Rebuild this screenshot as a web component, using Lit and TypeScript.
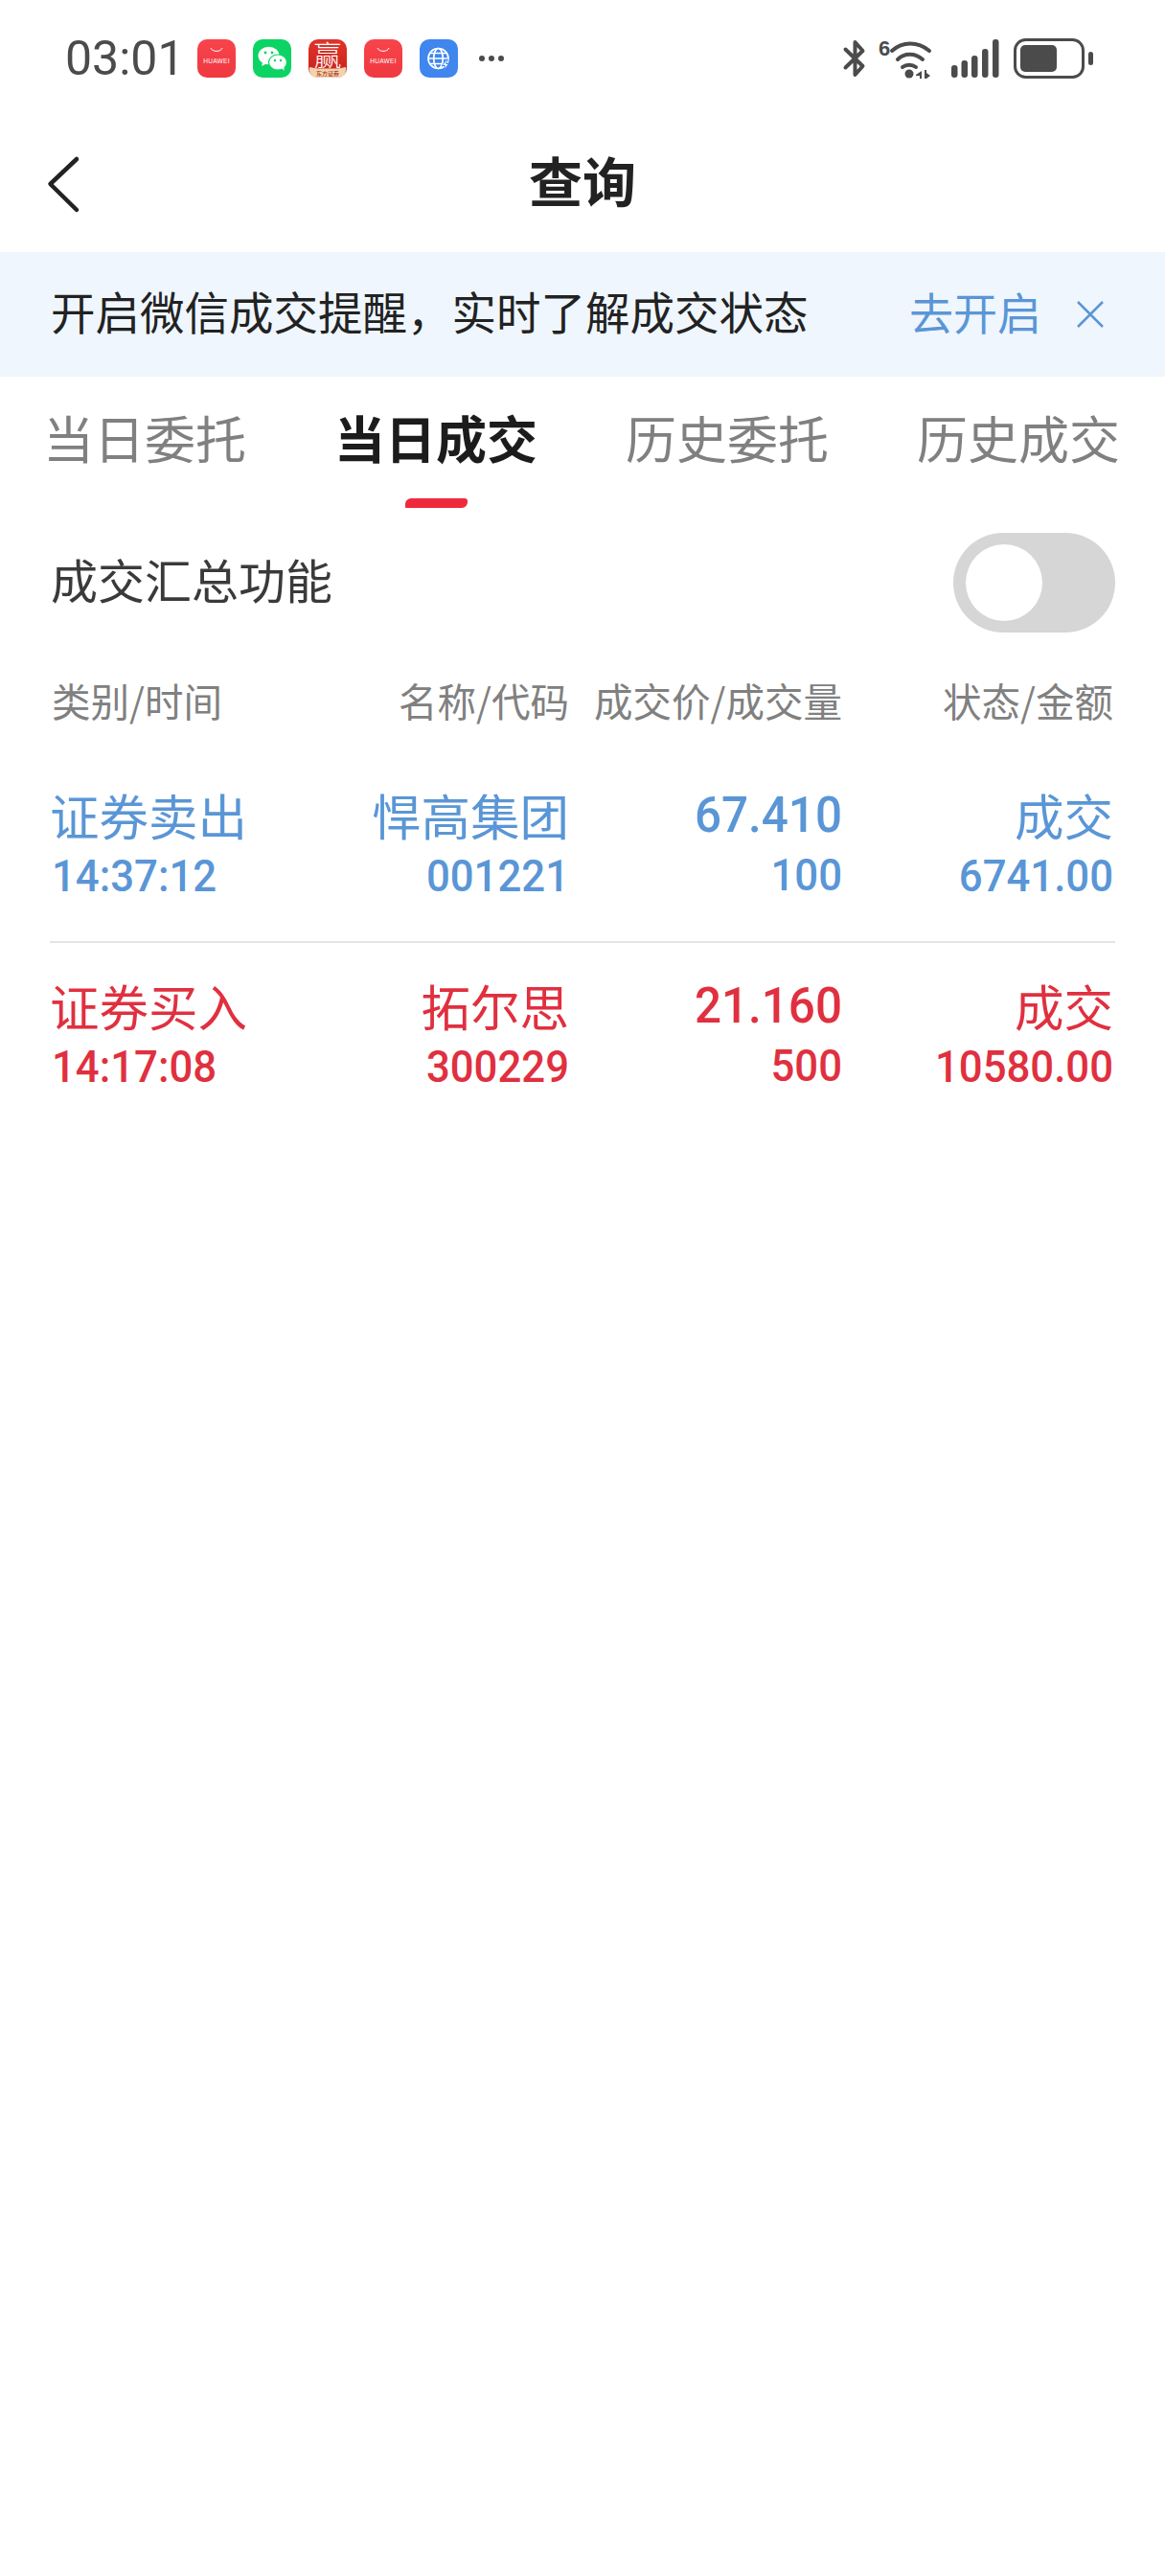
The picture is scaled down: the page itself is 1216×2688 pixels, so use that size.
import { LitElement, html, css } from "lit";
import { customElement } from "lit/decorators.js";

const huawei = html`<svg class="app" viewBox="0 0 40 40">
  <defs><linearGradient id="hw" x1="0" y1="0" x2="0" y2="1"><stop offset="0" stop-color="#f8444c"/><stop offset="1" stop-color="#ef3840"/></linearGradient></defs>
  <rect width="40" height="40" rx="10" fill="url(#hw)"/>
  <path d="M14 9c1.500 4.500 10.500 4.500 12 0" fill="none" stroke="#fff" stroke-width="1"/>
  <text x="20" y="25" class="hwt">HUAWEI</text>
</svg>`;

const wechat = html`<svg class="app" viewBox="0 0 40 40">
  <rect width="40" height="40" rx="10" fill="#0cd464"/>
  <ellipse cx="16.500" cy="17" rx="11" ry="9.300" fill="#fff"/>
  <path d="M10 23l-.8 5 5-2.800z" fill="#fff"/>
  <ellipse cx="26" cy="24" rx="9.500" ry="8" fill="#fff" stroke="#0cd464" stroke-width="1.200"/>
  <path d="M30 30l2.600 2.800-.2-4.600z" fill="#fff"/>
  <circle cx="13" cy="14" r="1.400" fill="#0cd464"/><circle cx="20" cy="14" r="1.400" fill="#0cd464"/>
  <circle cx="23" cy="22" r="1.200" fill="#0cd464"/><circle cx="29" cy="22" r="1.200" fill="#0cd464"/>
</svg>`;

const ying = html`<svg class="app" viewBox="0 0 40 40">
  <defs><linearGradient id="yg" x1="0" y1="0" x2="0" y2="1"><stop offset="0" stop-color="#e0332a"/><stop offset="1" stop-color="#c9201a"/></linearGradient></defs>
  <rect width="40" height="40" rx="10" fill="url(#yg)"/>
  <text x="20" y="28" class="ying">赢</text>
  <path d="M1 29c4 .5 6 1.500 9 1.500h20c3 0 5-1 9-1.500v3a8 8 0 0 1-8 8H9a8 8 0 0 1-8-8z" fill="#f3d3ad"/>
  <text x="20" y="37.500" class="dfzq">东方证券</text>
</svg>`;

const globe = html`<svg class="app" viewBox="0 0 40 40">
  <rect width="40" height="40" rx="10" fill="#3f86ee"/>
  <g fill="none" stroke="#fff" stroke-width="1.700">
    <circle cx="19.500" cy="20" r="10.500"/>
    <ellipse cx="19.500" cy="20" rx="4.800" ry="10.500"/>
    <path d="M9 20h21M10.500 14.500h18M10.500 25.500h18"/>
  </g>
  <path d="M28 21l-4.500 6.500h3l-1.500 5 5.500-7h-3l2-4.500z" fill="#fff" stroke="#3f86ee" stroke-width="1"/>
</svg>`;

const rows = [
  { cls: "sell", type: "证券卖出", time: "14:37:12", name: "悍高集团", code: "001221", price: "67.410", qty: "100", status: "成交", amount: "6741.00" },
  { cls: "buy", type: "证券买入", time: "14:17:08", name: "拓尔思", code: "300229", price: "21.160", qty: "500", status: "成交", amount: "10580.00" },
];

@customElement("app-root")
export class AppRoot extends LitElement {
  static styles = css`
    :host {
      display: block;
      width: 1216px;
      min-height: 2688px;
      background: #fff;
      font-family: "Noto Sans CJK SC", "Noto Sans", sans-serif;
      color: #222;
    }
    svg { overflow: visible; }
    .status {
      height: 122px;
      display: flex;
      align-items: center;
      padding: 0 74px 0 68px;
      box-sizing: border-box;
      color: #4b4b4b;
    }
    .time {
      font: 400 50px/48px Roboto, sans-serif;
      width: 138px;
    }
    .apps { display: flex; gap: 18px; align-items: center; }
    .app { width: 40px; height: 40px; display: block; }
    .hwt { font: 400 6.500px "Liberation Sans", sans-serif; fill: #fff; text-anchor: middle; letter-spacing: 0.3px; }
    .ying { font: 300 29px "Noto Sans CJK SC", sans-serif; fill: #fff; text-anchor: middle; }
    .dfzq { font: 500 6px "Noto Sans CJK SC", sans-serif; fill: #a8321f; text-anchor: middle; }
    .more { display: flex; gap: 4px; margin-left: 22px; }
    .more i { width: 6px; height: 6px; border-radius: 50%; background: #4b4b4b; display: block; }
    .sys { margin-left: auto; display: flex; align-items: center; }
    .bt { width: 24px; height: 40px; display: block; }
    .wifi { width: 56px; height: 42px; margin-left: 13px; display: block; }
    .sig { width: 50px; height: 40px; margin-left: 20px; display: block; }
    .bat { width: 84px; height: 42px; margin-left: 15px; display: block; }

    .nav {
      height: 141px;
      display: flex;
      align-items: center;
      justify-content: center;
      position: relative;
    }
    .back { position: absolute; left: 50px; top: 41px; width: 34px; height: 60px; }
    .title { font-size: 56px; font-weight: 700; line-height: 64px; color: #222; margin-top: -12px; }

    .banner {
      height: 130px;
      background: #eff6fd;
      display: flex;
      align-items: center;
      padding: 0 63px 0 53px;
      font-size: 46.500px;
      line-height: 60px;
      color: #222;
      box-sizing: border-box;
    }
    .banner > span { margin-top: -8px; }
    .banner .go { margin-left: auto; color: #5a96d6; font-size: 46px; }
    .banner svg { width: 30px; height: 30px; margin-left: 36px; display: block; }

    .tabs {
      height: 163px;
      padding: 37px 0 0 45px;
      box-sizing: border-box;
      display: flex;
      gap: 92px;
    }
    .tab {
      font-size: 53px;
      line-height: 52px;
      color: #808080;
      font-weight: 400;
      width: 212px;
      white-space: nowrap;
    }
    .tab.on { color: #1c1c1c; font-weight: 700; }
    .tab i {
      display: block;
      width: 65px;
      height: 10px;
      margin: 38px auto 0;
      background: #ee2a3c;
      border-radius: 6px 3px 6px 1px;
    }

    .sum {
      height: 104px;
      padding: 0 52px 0 53px;
      display: flex;
      align-items: center;
      justify-content: space-between;
    }
    .sum span { font-size: 49px; line-height: 56px; color: #3a3a3a; margin-top: -8px; }
    .toggle {
      width: 169px;
      height: 104px;
      border-radius: 52px;
      background: #d6d6d6;
      padding: 12px 0 0 13px;
      box-sizing: border-box;
    }
    .toggle i { display: block; width: 80px; height: 80px; border-radius: 50%; background: #fff; }

    .grid {
      display: grid;
      grid-template-columns: 271px 269px 285px 283px;
      padding: 0 54px 0 54px;
    }
    .head {
      padding-top: 47px;
      padding-bottom: 2px;
      font-size: 40.500px;
      line-height: 48px;
      color: #808080;
    }
    .row { padding-top: 42px; padding-bottom: 46px; }
    .row.first { padding-top: 70px; }
    .row + .row { border-top: 2px solid #e4e4e4; margin: 0 52px; padding-left: 2px; padding-right: 2px; }
    .r { text-align: right; }
    .l1 { font-size: 51.500px; line-height: 52px; white-space: nowrap; margin-top: -3px; margin-bottom: 6px; }
    .first-col .l1 { margin-left: -2px; }
    .l2 {
      font: 500 46.500px/44px Roboto, sans-serif;
      margin-top: 16px;
      transform: scaleX(.94);
      transform-origin: right center;
    }
    .first-col .l2 { transform-origin: left center; }
    .p1 {
      font: 500 52px/48px Roboto, sans-serif;
      transform: scaleX(.95);
      transform-origin: right center;
    }
    .sell { color: #5a96d6; }
    .buy { color: #e0303f; }
  `;

  render() {
    return html`
      <div class="status">
        <span class="time">03:01</span>
        <div class="apps">${huawei}${wechat}${ying}${huawei}${globe}</div>
        <div class="more"><i></i><i></i><i></i></div>
        <div class="sys">
          <svg class="bt" viewBox="0 0 24 40"><path d="M2.500 10.500L20.500 28 12.500 37V3l8 9L2.500 29.500" fill="none" stroke="#4b4b4b" stroke-width="4" stroke-linecap="round" stroke-linejoin="round"/></svg>
          <svg class="wifi" viewBox="0 0 56 42">
            <text x="0" y="18" style="font:700 22px 'Liberation Sans',sans-serif" fill="#4b4b4b">6</text>
            <g fill="none" stroke="#4b4b4b" stroke-width="4" stroke-linecap="round">
              <path d="M14 13C25 3 41 3 53 13"/>
              <path d="M20 22C27 15 38 15 46 22"/>
              <path d="M25 30C29 27 35 27 39 30"/>
            </g>
            <circle cx="32" cy="37" r="4.500" fill="#4b4b4b"/>
            <path d="M39 38l6-4v8h-2v-3h-4zM48 33h2v3l4 3-4 3h-2z" fill="#4b4b4b"/>
          </svg>
          <svg class="sig" viewBox="0 0 50 40">
            <g fill="#4b4b4b">
              <rect x="0" y="27" width="6.500" height="13" rx="3"/>
              <rect x="10.500" y="22" width="6.500" height="18" rx="3"/>
              <rect x="21" y="17" width="6.500" height="23" rx="3"/>
              <rect x="32" y="10" width="6.500" height="30" rx="3"/>
              <rect x="43" y="0" width="6.500" height="40" rx="3"/>
            </g>
          </svg>
          <svg class="bat" viewBox="0 0 84 42">
            <rect x="1.500" y="1.500" width="71" height="39" rx="11" fill="none" stroke="#4b4b4b" stroke-width="3"/>
            <rect x="7" y="7" width="38" height="28" rx="5" fill="#4b4b4b"/>
            <rect x="78" y="14" width="5" height="14" rx="2.500" fill="#4b4b4b"/>
          </svg>
        </div>
      </div>

      <div class="nav">
        <svg class="back" viewBox="0 0 34 60"><path d="M30 3L2.500 29l27.500 27" fill="none" stroke="#222" stroke-width="4.500" stroke-linecap="round" stroke-linejoin="round"/></svg>
        <span class="title">查询</span>
      </div>

      <div class="banner">
        <span>开启微信成交提醒，实时了解成交状态</span>
        <span class="go">去开启</span>
        <svg viewBox="0 0 30 30"><path d="M2 2l26 26M28 2L2 28" fill="none" stroke="#5a96d6" stroke-width="2.500"/></svg>
      </div>

      <div class="tabs">
        <div class="tab">当日委托</div>
        <div class="tab on">当日成交<i></i></div>
        <div class="tab">历史委托</div>
        <div class="tab">历史成交</div>
      </div>

      <div class="sum">
        <span>成交汇总功能</span>
        <div class="toggle"><i></i></div>
      </div>

      <div class="grid head">
        <div>类别/时间</div>
        <div class="r">名称/代码</div>
        <div class="r">成交价/成交量</div>
        <div class="r">状态/金额</div>
      </div>

      ${rows.map(
        (r, i) => html`
          <div class="grid row ${r.cls} ${i === 0 ? "first" : ""}">
            <div class="first-col"><div class="l1">${r.type}</div><div class="l2">${r.time}</div></div>
            <div class="r"><div class="l1">${r.name}</div><div class="l2">${r.code}</div></div>
            <div class="r"><div class="p1">${r.price}</div><div class="l2">${r.qty}</div></div>
            <div class="r"><div class="l1">${r.status}</div><div class="l2">${r.amount}</div></div>
          </div>
        `
      )}
    `;
  }
}
